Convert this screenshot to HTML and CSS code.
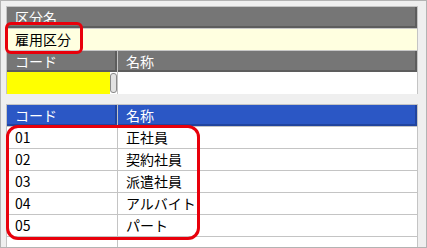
FILE: index.html
```html
<!DOCTYPE html>
<html lang="ja">
<head>
<meta charset="utf-8">
<link rel="stylesheet" href="styles.css">
</head>
<body>
<div class="frame">
  <section class="panel top">
    <div class="hdr single">区分名</div>
    <div class="cream">雇用区分</div>
    <div class="grid">
      <div class="hdr cell">コード</div>
      <div class="hdr cell">名称</div>
      <div class="cell input"><div class="yellow"></div><div class="thumb"></div></div>
      <div class="cell white"></div>
    </div>
  </section>
  <section class="panel list">
    <div class="grid">
      <div class="bhdr cell">コード</div>
      <div class="bhdr cell">名称</div>
      <div class="cell row">01</div><div class="cell row">正社員</div>
      <div class="cell row">02</div><div class="cell row">契約社員</div>
      <div class="cell row">03</div><div class="cell row">派遣社員</div>
      <div class="cell row">04</div><div class="cell row">アルバイト</div>
      <div class="cell row">05</div><div class="cell row">パート</div>
      <div class="cell row"></div><div class="cell row"></div>
    </div>
  </section>
  <div class="mark mark1"></div>
  <div class="mark mark2"></div>
</div>
</body>
</html>
```
FILE: styles.css
```css
* { box-sizing: border-box; }
html, body { margin: 0; padding: 0; }
body {
  font-family: "Noto Sans CJK JP", "Noto Sans", sans-serif;
  font-size: 14px;
}
.frame {
  position: relative;
  width: 427px;
  height: 248px;
  background: #efefef;
  border: 1px solid #b3b3b3;
  padding: 5px 8px 0 5px;
  overflow: hidden;
}
.panel {
  width: 412px;
  border: 1px solid #c4c4c4;
  border-bottom: none;
  background: #fff;
}
.top { }
.list { margin-top: 10px; }
.hdr {
  background: #767676;
  color: #fff;
  box-shadow: inset -2px -2px 0 #5d5d5d;
}
.single {
  height: 22px;
  line-height: 20px;
  padding-left: 8px;
  border-bottom: 1px solid #c8c8c8;
}
.cream {
  height: 22px;
  line-height: 21px;
  padding-left: 8px;
  background: #ffffe0;
  border-bottom: 1px solid #c8c8c8;
  color: #000;
}
.grid {
  display: grid;
  grid-template-columns: 111px 1fr;
}
.cell {
  border-right: 1px solid #c4c4c4;
  padding-left: 8px;
}
.cell:nth-child(2n) { border-right: none; }
.grid .hdr {
  height: 21px;
  line-height: 20px;
}
.input {
  height: 22px;
  padding: 0;
  display: flex;
}
.yellow { flex: 1; background: #ffff00; }
.thumb {
  width: 7px;
  margin: 1px 0 1px 0;
  background: #e2e2e2;
  border: 1px solid #8a8a8a;
  border-radius: 3px;
}
.white { height: 22px; background: #fff; }
.bhdr {
  height: 22px;
  line-height: 20px;
  background: #2b57c5;
  color: #fff;
  box-shadow: inset -2px -2px 0 #21449e;
  border-bottom: 1px solid #c4c4c4;
}
.row {
  height: 22px;
  line-height: 21px;
  border-bottom: 1px solid #c4c4c4;
  color: #000;
}
.mark {
  position: absolute;
  border: 3px solid #e8000b;
}
.mark1 {
  left: 4px; top: 21px; width: 78px; height: 32px;
  border-radius: 6px;
}
.mark2 {
  left: 5px; top: 124px; width: 194px; height: 115px;
  border-radius: 12px;
}
```
